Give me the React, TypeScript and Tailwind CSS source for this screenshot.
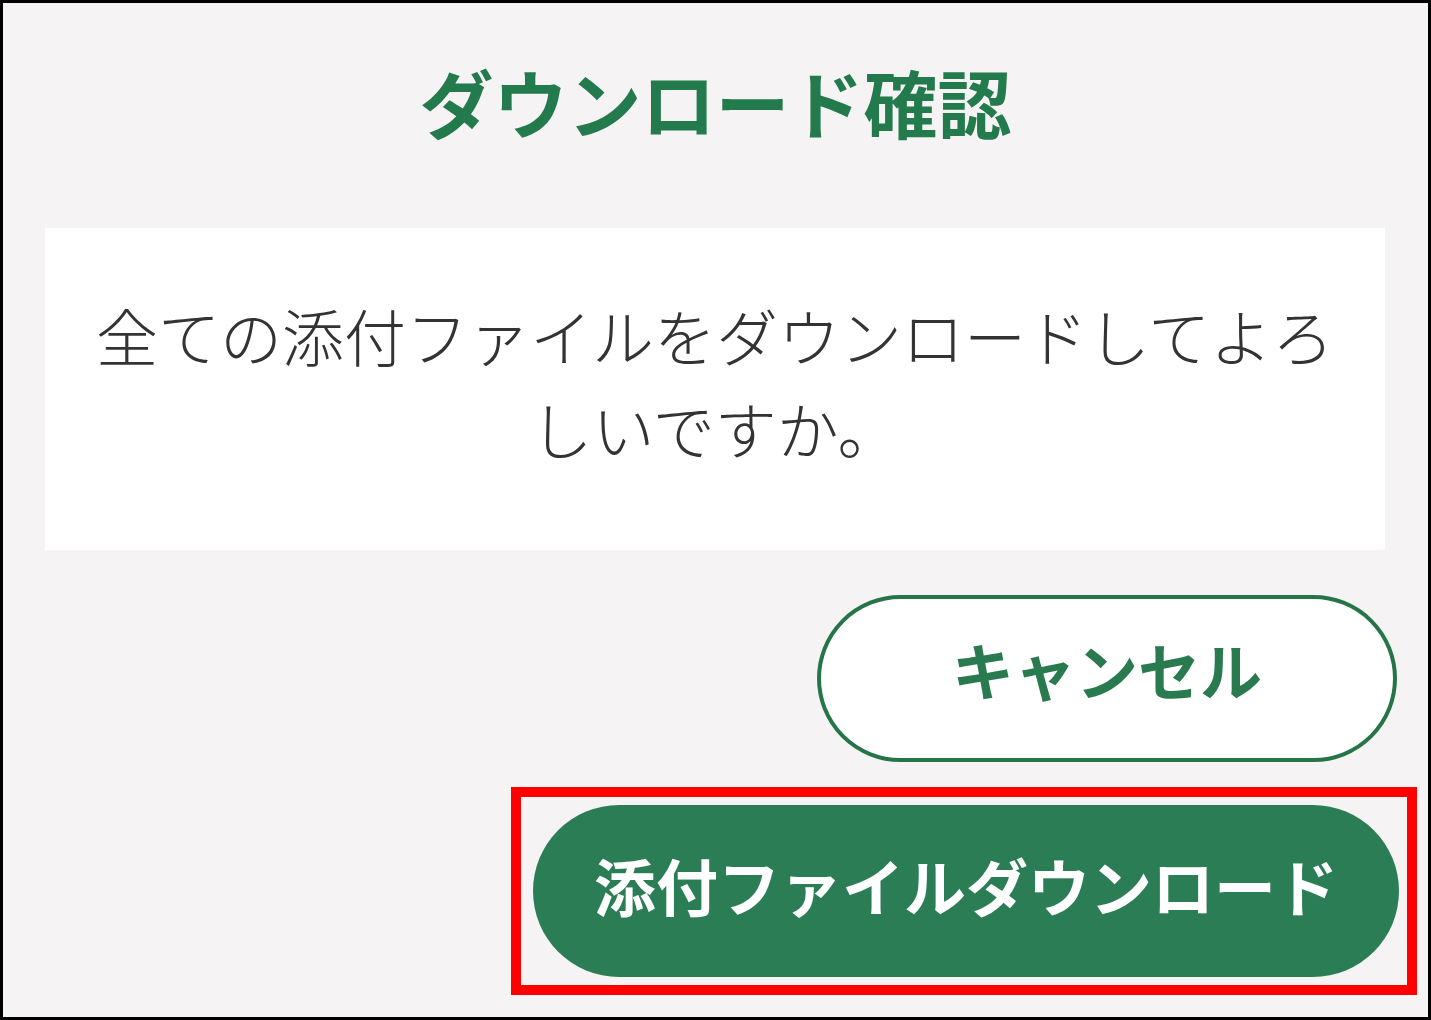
import React from "react";

export default function App() {
  const jp = { fontFamily: '"Noto Sans CJK JP", "Noto Sans", sans-serif' };
  return (
    <div
      className="w-[1431px] h-[1020px] border-[3px] border-black bg-[#f5f3f4] flex flex-col"
      style={jp}
    >
      <div className="h-[204px] flex items-center justify-center pb-[8px]">
        <h1 className="text-[74px] leading-none font-bold text-[#237a4c]">ダウンロード確認</h1>
      </div>
      <div className="mt-[21px] ml-[42px] mr-[43px] h-[322px] bg-white flex items-center justify-center">
        <p className="text-[62px] leading-[93px] font-light text-[#333333] text-center whitespace-nowrap mb-[14px]">
          全ての添付ファイルをダウンロードしてよろ
          <br />
          しいですか。
        </p>
      </div>
      <div className="flex flex-col items-end">
        <button className="mt-[45px] mr-[31px] w-[580px] h-[167px] rounded-full border-[4px] border-[#267549] bg-white text-[#2a7a50] text-[62px] font-bold leading-none flex items-center justify-center pb-[20px]">
          キャンセル
        </button>
        <div className="mt-[25px] mr-[11px] border-[10px] border-[#ff0000] pl-[12px] pr-[8px] py-[8px]">
          <button className="w-[866px] h-[172px] rounded-full bg-[#2b7d55] text-white text-[62px] font-bold leading-none flex items-center justify-center pb-[12px]">
            添付ファイルダウンロード
          </button>
        </div>
      </div>
    </div>
  );
}
